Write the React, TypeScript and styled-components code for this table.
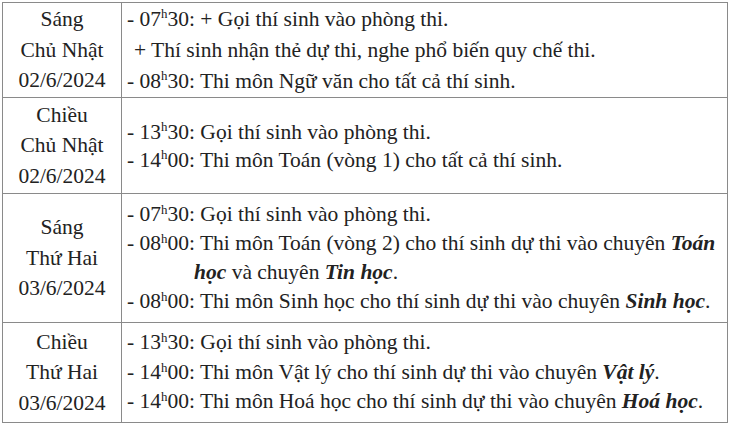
import styled, { createGlobalStyle } from "styled-components";

const GlobalStyle = createGlobalStyle`
  html, body {
    margin: 0;
    padding: 0;
    background: #ffffff;
  }
`;

const Page = styled.div`
  padding: 2px 2px 0 2px;
`;

const Table = styled.table`
  width: 726px;
  border-collapse: collapse;
  table-layout: fixed;
  font-family: "Liberation Serif", "Times New Roman", serif;
  font-size: 21.5px;
  color: #222222;
`;

const Row = styled.tr<{ $height: number }>`
  height: ${(p) => p.$height}px;
`;

const DayCell = styled.td`
  width: 118px;
  border: 1.5px solid #8a8a8a;
  text-align: center;
  vertical-align: middle;
  padding: 0;
  line-height: 30.5px;
`;

const PlanCell = styled.td<{ $lh: number }>`
  border: 1.5px solid #8a8a8a;
  vertical-align: middle;
  padding: 0 0 0 5px;
  line-height: ${(p) => p.$lh}px;
  white-space: nowrap;
`;

const Line = styled.div<{ $indent?: number }>`
  padding-left: ${(p) => p.$indent ?? 0}px;
`;

const Sup = styled.span`
  font-size: 0.6em;
  position: relative;
  top: -0.55em;
  line-height: 0;
`;

const Strong = styled.b`
  font-weight: bold;
  font-style: italic;
`;

type Item = { indent?: number; content: React.ReactNode };

type Session = {
  height: number;
  lh: number;
  day: string[];
  items: Item[];
};

const t = (h: string, m: string) => (
  <>
    {h}
    <Sup>h</Sup>
    {m}
  </>
);

const sessions: Session[] = [
  {
    height: 95,
    lh: 31,
    day: ["Sáng", "Chủ Nhật", "02/6/2024"],
    items: [
      { content: <>- {t("07", "30")}: + Gọi thí sinh vào phòng thi.</> },
      { indent: 7, content: <>+ Thí sinh nhận thẻ dự thi, nghe phổ biến quy chế thi.</> },
      { content: <>- {t("08", "30")}: Thi môn Ngữ văn cho tất cả thí sinh.</> },
    ],
  },
  {
    height: 96,
    lh: 28,
    day: ["Chiều", "Chủ Nhật", "02/6/2024"],
    items: [
      { content: <>- {t("13", "30")}: Gọi thí sinh vào phòng thi.</> },
      { content: <>- {t("14", "00")}: Thi môn Toán (vòng 1) cho tất cả thí sinh.</> },
    ],
  },
  {
    height: 129,
    lh: 29,
    day: ["Sáng", "Thứ Hai", "03/6/2024"],
    items: [
      { content: <>- {t("07", "30")}: Gọi thí sinh vào phòng thi.</> },
      {
        content: (
          <>
            - {t("08", "00")}: Thi môn Toán (vòng 2) cho thí sinh dự thi vào chuyên <Strong>Toán</Strong>
          </>
        ),
      },
      {
        indent: 67,
        content: (
          <>
            <Strong>học</Strong> và chuyên <Strong>Tin học</Strong>.
          </>
        ),
      },
      {
        content: (
          <>
            - {t("08", "00")}: Thi môn Sinh học cho thí sinh dự thi vào chuyên <Strong>Sinh học</Strong>.
          </>
        ),
      },
    ],
  },
  {
    height: 100,
    lh: 29.5,
    day: ["Chiều", "Thứ Hai", "03/6/2024"],
    items: [
      { content: <>- {t("13", "30")}: Gọi thí sinh vào phòng thi.</> },
      {
        content: (
          <>
            - {t("14", "00")}: Thi môn Vật lý cho thí sinh dự thi vào chuyên <Strong>Vật lý</Strong>.
          </>
        ),
      },
      {
        content: (
          <>
            - {t("14", "00")}: Thi môn Hoá học cho thí sinh dự thi vào chuyên <Strong>Hoá học</Strong>.
          </>
        ),
      },
    ],
  },
];

export default function App() {
  return (
    <>
      <GlobalStyle />
      <Page>
        <Table>
          <tbody>
            {sessions.map((s, i) => (
              <Row key={i} $height={s.height}>
                <DayCell>
                  {s.day.map((d) => (
                    <div key={d}>{d}</div>
                  ))}
                </DayCell>
                <PlanCell $lh={s.lh}>
                  {s.items.map((it, j) => (
                    <Line key={j} $indent={it.indent}>
                      {it.content}
                    </Line>
                  ))}
                </PlanCell>
              </Row>
            ))}
          </tbody>
        </Table>
      </Page>
    </>
  );
}
